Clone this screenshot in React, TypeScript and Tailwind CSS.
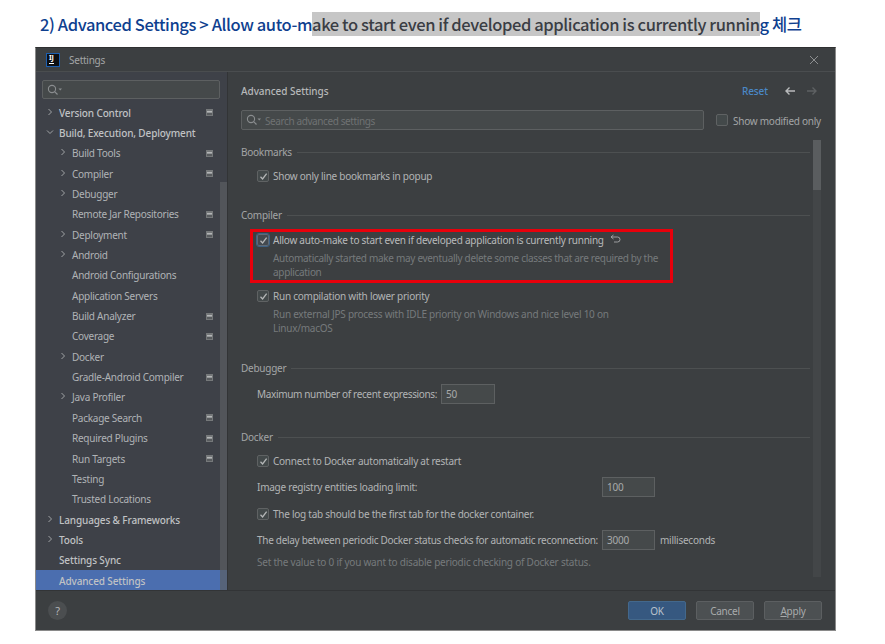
const font = { fontFamily: '"Noto Sans", "Noto Sans CJK KR", sans-serif' };

type Row = { t: string; lvl: number; chev?: "r" | "d"; icon?: boolean; bold?: boolean; sel?: boolean };
const rows: Row[] = [
  { t: "Version Control", lvl: 0, chev: "r", icon: true, bold: true },
  { t: "Build, Execution, Deployment", lvl: 0, chev: "d", bold: true },
  { t: "Build Tools", lvl: 1, chev: "r", icon: true },
  { t: "Compiler", lvl: 1, chev: "r", icon: true },
  { t: "Debugger", lvl: 1, chev: "r" },
  { t: "Remote Jar Repositories", lvl: 1, icon: true },
  { t: "Deployment", lvl: 1, chev: "r", icon: true },
  { t: "Android", lvl: 1, chev: "r" },
  { t: "Android Configurations", lvl: 1 },
  { t: "Application Servers", lvl: 1 },
  { t: "Build Analyzer", lvl: 1, icon: true },
  { t: "Coverage", lvl: 1, icon: true },
  { t: "Docker", lvl: 1, chev: "r" },
  { t: "Gradle-Android Compiler", lvl: 1, icon: true },
  { t: "Java Profiler", lvl: 1, chev: "r" },
  { t: "Package Search", lvl: 1, icon: true },
  { t: "Required Plugins", lvl: 1, icon: true },
  { t: "Run Targets", lvl: 1, icon: true },
  { t: "Testing", lvl: 1 },
  { t: "Trusted Locations", lvl: 1 },
  { t: "Languages & Frameworks", lvl: 0, chev: "r", bold: true },
  { t: "Tools", lvl: 0, chev: "r", bold: true },
  { t: "Settings Sync", lvl: 0, bold: true },
  { t: "Advanced Settings", lvl: 0, bold: true, sel: true },
];

function SearchIcon() {
  return (
    <svg width="17" height="12" viewBox="0 0 17 12" fill="none" className="shrink-0">
      <circle cx="5" cy="5" r="3.6" stroke="#8a8d8f" strokeWidth="1.1" />
      <path d="M7.6 7.6 L10.5 10.5" stroke="#8a8d8f" strokeWidth="1.2" />
      <path d="M11.5 4.5 H15 L13.25 6.5 Z" fill="#8a8d8f" />
    </svg>
  );
}

function Chevron({ dir }: { dir: "r" | "d" }) {
  return (
    <svg width="8" height="8" viewBox="0 0 8 8" fill="none" className="shrink-0">
      <path d={dir === "r" ? "M2.5 1 L5.5 4 L2.5 7" : "M1 2.5 L4 5.5 L7 2.5"} stroke="#a0a3a5" strokeWidth="1" />
    </svg>
  );
}

function ProjIcon() {
  return (
    <svg width="7" height="7" viewBox="0 0 7 7" className="shrink-0 block">
      <rect width="7" height="7" fill="#75787a" />
      <rect x="1" y="2" width="5" height="1.5" fill="#b4b6b7" />
      <rect x="1" y="4" width="5" height="2" fill="#595c5f" />
    </svg>
  );
}

function Check({ focused }: { focused?: boolean }) {
  return (
    <span
      className={
        focused
          ? "w-3 h-3 shrink-0 rounded-[2px] bg-[#43494f] border border-[#5f6a75] flex items-center justify-center outline outline-1 outline-[#3d6185]"
          : "w-3 h-3 shrink-0 rounded-[2px] bg-[#43494a] border border-[#5f6263] flex items-center justify-center"
      }
    >
      <svg width="9" height="9" viewBox="0 0 9 9" fill="none">
        <path d="M1.5 4.7 L3.6 7 L7.6 1.6" stroke="#b4b6b7" strokeWidth="1.3" />
      </svg>
    </span>
  );
}

function Section({ label, className }: { label: string; className: string }) {
  return (
    <div className={"flex items-center gap-[5px] h-[14px] pr-[25px] " + className}>
      <span className="text-[#a3a5a6]">{label}</span>
      <span className="flex-1 h-px bg-[#4d5051]" />
    </div>
  );
}

function CheckRow({ label, className }: { label: string; className: string }) {
  return (
    <div className={"flex items-center gap-[4px] pl-[16px] h-[14px] text-[#b2b4b5] " + className}>
      <Check />
      <span>{label}</span>
    </div>
  );
}

function Field({ value, w }: { value: string; w: string }) {
  return (
    <span className={"h-[20px] bg-[#45494a] border border-[#5d6061] flex items-center pl-[4px] text-[#a8aaab] " + w}>{value}</span>
  );
}

function Btn({ children, primary }: { children: React.ReactNode; primary?: boolean }) {
  return (
    <span
      className={
        primary
          ? "w-[58px] h-[19px] rounded-[2px] bg-[#365880] border border-[#43688c] flex items-center justify-center text-[#b9c2cc]"
          : "w-[58px] h-[19px] rounded-[2px] bg-[#4c5052] border border-[#5c5f61] flex items-center justify-center text-[#a9abac]"
      }
    >
      {children}
    </span>
  );
}

export default function App() {
  return (
    <div className="w-[885px] h-[644px] bg-white overflow-hidden flex flex-col" style={font}>
      <div
        className="h-[47px] pl-[40px] pt-[12px] text-[16.5px] leading-[25px] font-medium whitespace-nowrap text-[#0f3f8f] tracking-[-0.4px]"
        style={{ fontFamily: '"Noto Sans CJK KR", "Noto Sans", sans-serif' }}
      >
        <span>2) Advanced Settings &gt; Allow auto-m</span>
        <span className="inline-block h-[24px] bg-[#c6c6c6] text-[#3a3d44] align-top">
          ake to start even if developed application is currently runnin
        </span>
        <span>g 체크</span>
      </div>

      <div className="ml-[35px] w-[801px] h-[584px] border border-[#8a8a8a] border-t-[#2f3031] bg-[#3c3f41] flex flex-col text-[10px] leading-[14px] tracking-[-0.25px]">
        <div className="h-[24px] shrink-0 border-b border-[#4a4d4f] flex items-center pl-[10px] pr-[16px]">
          <span className="w-[14px] h-[14px] bg-[#0d0f12] border border-[#1c5fb0] flex flex-col pl-[2px] pt-0 text-white text-[7px] leading-[8px] font-bold">
            IJ
            <span className="w-[5px] h-px bg-white mt-[1px]" />
          </span>
          <span className="ml-[9px] mt-[1px] text-[#a3a5a6]">Settings</span>
          <svg width="10" height="10" viewBox="0 0 10 10" className="ml-auto" fill="none">
            <path d="M1 1 L9 9 M9 1 L1 9" stroke="#8d8f90" strokeWidth="1" />
          </svg>
        </div>

        <div className="flex-1 flex min-h-0">
          <aside className="relative w-[191px] shrink-0 bg-[#3e4148] pt-[8px] overflow-hidden">
            <div className="mx-[6px] w-[178px] h-[19px] rounded-[2px] bg-[#45494a] border border-[#5d6061] flex items-center pl-[4px]">
              <SearchIcon />
            </div>
            <div className="mt-[3.5px]">
              {rows.map((r) => (
                <div
                  key={r.t}
                  className={
                    "h-[20.35px] flex items-center pr-[14px] " +
                    (r.lvl === 0 ? "pl-[23px] " : "pl-[36px] ") +
                    (r.sel ? "bg-[#4b6eaf] " : "") +
                    (r.bold ? "font-medium text-[#c0c2c4] tracking-[-0.13px]" : "text-[#b0b3b6]")
                  }
                >
                  <span className="relative whitespace-nowrap">
                    {r.chev && (
                      <span className="absolute -left-[13px] top-[2px]">
                        <Chevron dir={r.chev} />
                      </span>
                    )}
                    {r.t}
                  </span>
                  {r.icon && (
                    <span className="ml-auto">
                      <ProjIcon />
                    </span>
                  )}
                </div>
              ))}
            </div>
            <div className="absolute right-0 top-[110px] bottom-0 w-[7px] bg-[#5b5e63]/70" />
          </aside>

          <main className="flex-1 min-w-0 border-l border-[#323436] flex flex-col pl-[13px]">
            <div className="flex items-center h-[14px] mt-[12px] pr-[17px]">
              <span className="font-medium text-[#b6b8b9] tracking-[-0.05px]">Advanced Settings</span>
              <span className="ml-auto text-[#4a88c7] font-medium tracking-[-0.1px]">Reset</span>
              <svg width="12" height="10" viewBox="0 0 12 10" fill="none" className="ml-[16px]">
                <path d="M11 5 H2 M5.5 1.5 L2 5 L5.5 8.5" stroke="#b9bbbc" strokeWidth="1.4" />
              </svg>
              <svg width="12" height="10" viewBox="0 0 12 10" fill="none" className="ml-[10px]">
                <path d="M1 5 H10 M6.5 1.5 L10 5 L6.5 8.5" stroke="#5e6163" strokeWidth="1.4" />
              </svg>
            </div>

            <div className="flex items-center h-[20px] mt-[12px]">
              <div className="w-[463px] h-[20px] rounded-[2px] bg-[#45494a] border border-[#5d6061] flex items-center pl-[4px] gap-[2px] text-[#6f7273]">
                <SearchIcon />
                <span className="mt-[1px] tracking-[-0.4px]">Search advanced settings</span>
              </div>
              <span className="ml-[12px] w-3 h-3 rounded-[2px] bg-[#43494a] border border-[#5f6263]" />
              <span className="ml-[5px] mt-[1px] text-[#a3a5a6]">Show modified only</span>
            </div>

            <div className="relative flex-1 min-h-0 overflow-hidden">
              <Section label="Bookmarks" className="mt-[15px]" />
              <CheckRow label="Show only line bookmarks in popup" className="mt-[10px]" />
              <Section label="Compiler" className="mt-[25px]" />

              <div className="mt-[7px] ml-[9px] w-[423px] h-[54px] border-[3px] border-[#e8000b] pl-[4px] pt-[1px]">
                <div className="flex items-center gap-[4px] h-[14px] text-[#b8babb] whitespace-nowrap">
                  <Check focused />
                  <span>Allow auto-make to start even if developed application is currently running</span>
                  <svg width="11" height="10" viewBox="0 0 11 10" fill="none" className="ml-[2px] -mt-[2px]">
                    <path d="M3.5 1 L1 3 L3.5 5 M1 3 H7.5 A2.5 2.5 0 0 1 7.5 8 H4" stroke="#a6a8a9" strokeWidth="0.9" />
                  </svg>
                </div>
                <div className="pl-[16px] mt-[4px] text-[#767a7c] whitespace-nowrap tracking-[-0.31px]">
                  <div>Automatically started make may eventually delete some classes that are required by the</div>
                  <div>application</div>
                </div>
              </div>

              <CheckRow label="Run compilation with lower priority" className="mt-[6px]" />
              <div className="pl-[32px] mt-[4px] text-[#767a7c] whitespace-nowrap">
                <div>Run external JPS process with IDLE priority on Windows and nice level 10 on</div>
                <div>Linux/macOS</div>
              </div>

              <Section label="Debugger" className="mt-[26px]" />
              <div className="flex items-center pl-[16px] mt-[9px] h-[20px] text-[#b2b4b5]">
                <span className="w-[184px] whitespace-nowrap tracking-[-0.35px]">Maximum number of recent expressions:</span>
                <Field value="50" w="w-[54px]" />
              </div>

              <Section label="Docker" className="mt-[26px]" />
              <CheckRow label="Connect to Docker automatically at restart" className="mt-[10px]" />
              <div className="flex items-center pl-[16px] mt-[9px] h-[20px] text-[#b2b4b5]">
                <span className="w-[345px]">Image registry entities loading limit:</span>
                <Field value="100" w="w-[53px]" />
              </div>
              <CheckRow label="The log tab should be the first tab for the docker container." className="mt-[10px]" />
              <div className="flex items-center pl-[16px] mt-[9px] h-[20px] text-[#b2b4b5]">
                <span className="w-[345px] whitespace-nowrap tracking-[-0.3px]">The delay between periodic Docker status checks for automatic reconnection:</span>
                <Field value="3000" w="w-[53px]" />
                <span className="ml-[5px]">milliseconds</span>
              </div>
              <div className="pl-[16px] mt-[5px] text-[#767a7c] tracking-[-0.22px]">Set the value to 0 if you want to disable periodic checking of Docker status.</div>

              <div className="absolute right-[14px] top-[10px] bottom-[13px] w-[8px] bg-[#434648]">
                <div className="h-[50px] bg-[#5a5d5f]" />
              </div>
            </div>
          </main>
        </div>

        <div className="h-[40px] shrink-0 border-t border-[#323436] flex items-center pl-[12px] pr-[13px] gap-[10px]">
          <span className="w-[19px] h-[19px] rounded-full bg-[#4b4e50] flex items-center justify-center text-[#b5b7b8] text-[11px] mr-auto">?</span>
          <Btn primary>OK</Btn>
          <Btn>Cancel</Btn>
          <Btn>
            <span>
              <span className="underline">A</span>pply
            </span>
          </Btn>
        </div>
      </div>
    </div>
  );
}
